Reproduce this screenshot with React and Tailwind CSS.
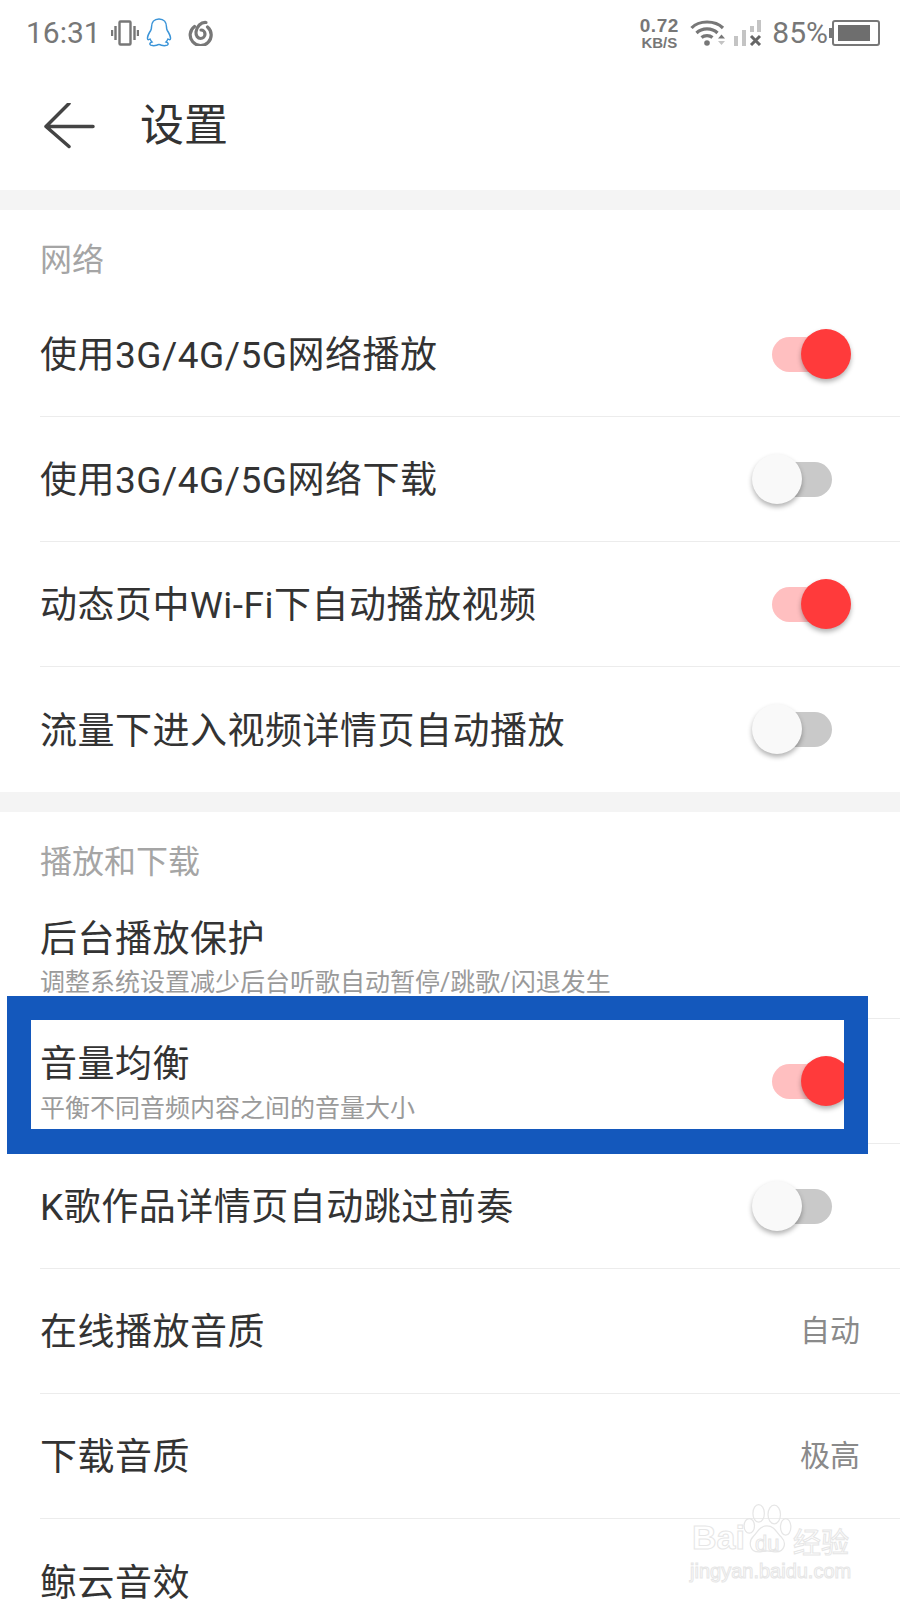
import React from "react";

const cjk = "font-['Roboto','Noto_Sans_CJK_SC',sans-serif]";

function Toggle({ on }) {
  return (
    <div className="relative w-[99px] h-[50px] shrink-0 -mt-[1px]">
      <div className={`absolute left-[20px] top-[8px] w-[60px] h-[35px] rounded-full ${on ? "bg-[#ffbfc0]" : "bg-[#c9c9c9]"}`} />
      <div
        className={`absolute top-0 w-[50px] h-[50px] rounded-full shadow-[0_3px_5px_rgba(0,0,0,0.3)] ${
          on ? "left-[49px] bg-[#ff3a3b]" : "left-0 bg-[#f9f9f9]"
        }`}
      />
    </div>
  );
}

function Row({ title, sub, toggle, value, last, subClass = "mt-[6px]" }) {
  return (
    <div className={`ml-[40px] h-[125px] flex items-center justify-between pr-[49px] ${last ? "" : "border-b border-[#ececec]"}`}>
      <div className="min-w-0 pt-[4px]">
        <div className="text-[37px] leading-[46px] text-[#333] tracking-[0.5px] whitespace-nowrap">{title}</div>
        {sub && <div className={`text-[25px] leading-[32px] text-[#9a9a9a] whitespace-nowrap ${subClass}`}>{sub}</div>}
      </div>
      {toggle !== undefined && <Toggle on={toggle} />}
      {value && <span className="text-[30px] text-[#8a8a8a] -mr-[9px] pb-[2px]">{value}</span>}
    </div>
  );
}

function SectionTitle({ children }) {
  return (
    <div className="h-[82px] pl-[40px] pt-[24px] text-[32px] leading-[52px] text-[#a5a5a5]">{children}</div>
  );
}

function StatusBar() {
  return (
    <div className="h-[65px] flex items-center pl-[26px] pr-[20px] text-[#777] font-['Roboto',sans-serif]">
      <span className="text-[30px] leading-none">16:31</span>
      <svg className="ml-[10px]" width="28" height="26" viewBox="0 0 28 26" fill="none" stroke="#777" strokeWidth="2.4">
        <rect x="8.5" y="1.5" width="11" height="23" rx="1" />
        <path d="M4.5 6v14M23.5 6v14M1 10v6M27 10v6" />
      </svg>
      <svg className="ml-[7px]" width="26" height="29" viewBox="0 0 26 29" fill="none" stroke="#3a94d8" strokeWidth="1.5">
        <path d="M13 1c-5 0-7.500 3.500-7.500 8 0 1-.2 2.500-.8 3.500C3 15 1.500 18 1.500 20.500c0 1.500 1 1.500 2.500.5.500 1 1 2 2 3-1.500.5-2.500 1.500-2 2.500.5 1.200 4 1.500 6.500.8 1-.6 2-.8 2.500-.8s1.500.2 2.500.8c2.500.7 6 .4 6.500-.8.500-1-.5-2-2-2.500 1-1 1.500-2 2-3 1.500 1 2.500 1 2.500-.5 0-2.500-1.500-5.500-3.200-8-.6-1-.8-2.500-.8-3.500 0-4.500-2.500-8-7.500-8z" />
      </svg>
      <svg className="ml-[15px]" width="26" height="26" viewBox="0 0 26 26" fill="none" stroke="#777" strokeWidth="3.2" strokeLinecap="round">
        <path d="M7.500 6.500A10.500 10.500 0 1 0 20.500 7" />
        <path d="M19 2.500C14 2 9.500 6.500 9 12c-.3 4 2 6.500 4.500 6.500 2.500 0 4.500-2 4.500-4.500s-2-4-4-4" />
      </svg>
      <div className="ml-auto flex items-center">
        <div className="flex flex-col items-center w-[42px] font-['Liberation_Sans',sans-serif] font-bold mt-[2px]">
          <span className="text-[19px] leading-[18px] tracking-[0.5px]">0.72</span>
          <span className="text-[15px] leading-[15px]">KB/S</span>
        </div>
        <svg className="ml-[10px]" width="36" height="28" viewBox="0 0 36 28" fill="none" stroke="#777" strokeWidth="3.2">
          <path d="M1.500 9C9 1 25 1 33 9" />
          <path d="M6.500 14C12 8.500 22 8.500 27.500 14" />
          <path d="M11.500 18.500c3-2.500 8-2.500 11 0" />
          <circle cx="17" cy="24" r="2.800" fill="#777" stroke="none" />
          <path d="M28 19.500l3.500-4 3.500 4z" fill="#777" stroke="none" />
          <path d="M28 22l3.500 4 3.500-4z" fill="#c4c4c4" stroke="none" />
        </svg>
        <svg className="ml-[8px]" width="28" height="26" viewBox="0 0 28 26" fill="none">
          <rect x="0" y="16" width="4" height="10" fill="#c4c4c4" />
          <rect x="8" y="10" width="4" height="16" fill="#c4c4c4" />
          <rect x="16" y="6" width="4" height="6" fill="#c4c4c4" />
          <rect x="23" y="0" width="4" height="12" fill="#c4c4c4" />
          <path d="M17 16l9 9M26 16l-9 9" stroke="#666" strokeWidth="3" />
        </svg>
        <span className="ml-[10px] text-[30px] leading-none">85%</span>
        <svg className="ml-[1px]" width="51" height="26" viewBox="0 0 51 26" fill="none">
          <rect x="0" y="8" width="3" height="10" fill="#777" />
          <rect x="4" y="1" width="46" height="24" rx="2" stroke="#777" strokeWidth="2" />
          <rect x="9" y="5" width="32" height="16" fill="#6e6e6e" />
        </svg>
      </div>
    </div>
  );
}

function Watermark() {
  const hollow = "text-transparent [-webkit-text-stroke:1px_#e6e6e6]";
  return (
    <div className="absolute left-[690px] top-[1503px] w-[170px] h-[80px] font-['Liberation_Sans',sans-serif]">
      <span className={`absolute left-[2px] top-[12px] text-[34px] leading-[44px] font-bold ${hollow}`}>Bai</span>
      <svg className="absolute left-[53px] top-0" width="50" height="52" viewBox="0 0 48 50" fill="none" stroke="#e6e6e6" strokeWidth="1.2">
        <ellipse cx="15" cy="10" rx="5.500" ry="8.500" />
        <ellipse cx="30" cy="11" rx="6" ry="9" />
        <ellipse cx="6" cy="22" rx="5" ry="7" />
        <ellipse cx="41" cy="23" rx="5" ry="8" />
        <path d="M23 22c-7 0-9 6-13 10-5 5-4 15 5 15 3 0 5-1 8-1s6 1 9 1c8 0 10-9 5-14-5-4-6-11-14-11z" />
      </svg>
      <span className={`absolute left-[65px] top-[31px] text-[22px] leading-[20px] ${hollow}`}>du</span>
      <span className={`absolute left-[103px] top-[20px] text-[28px] leading-[36px] font-['Noto_Sans_CJK_SC',sans-serif] ${hollow}`}>经验</span>
      <span className={`absolute left-0 top-[56px] text-[20px] leading-[24px] whitespace-nowrap ${hollow}`}>jingyan.baidu.com</span>
    </div>
  );
}

function App() {
  return (
    <div className={`relative w-[900px] h-[1600px] overflow-hidden bg-white ${cjk}`}>
      <StatusBar />
      <div className="h-[125px] flex items-center pb-[3px]">
        <svg className="ml-[44px]" width="52" height="46" viewBox="0 0 52 46" fill="none" stroke="#444" strokeWidth="3.500" strokeLinecap="round" strokeLinejoin="round">
          <path d="M25 2L2 25l23 20M2 25h47" transform="translate(0 -1.500)" />
        </svg>
        <span className="ml-[44px] text-[44px] leading-none text-[#333]">设置</span>
      </div>
      <div className="h-[20px] bg-[#f4f4f4]" />
      <SectionTitle>网络</SectionTitle>
      <Row title="使用3G/4G/5G网络播放" toggle={true} />
      <Row title="使用3G/4G/5G网络下载" toggle={false} />
      <Row title="动态页中Wi-Fi下自动播放视频" toggle={true} />
      <Row title="流量下进入视频详情页自动播放" toggle={false} last />
      <div className="h-[20px] bg-[#f4f4f4]" />
      <SectionTitle>播放和下载</SectionTitle>
      <Row title="后台播放保护" sub="调整系统设置减少后台听歌自动暂停/跳歌/闪退发生" subClass="mt-[4px]" />
      <Row title="音量均衡" sub="平衡不同音频内容之间的音量大小" toggle={true} subClass="mt-[5px]" />
      <Row title="K歌作品详情页自动跳过前奏" toggle={false} />
      <Row title="在线播放音质" value="自动" />
      <Row title="下载音质" value="极高" />
      <Row title="鲸云音效" last />
      <div className="absolute left-[7px] top-[996px] w-[861px] h-[158px] border-[#1458bc] border-t-[24px] border-b-[25px] border-l-[24px] border-r-[24px]" />
      <Watermark />
    </div>
  );
}

export default App;
